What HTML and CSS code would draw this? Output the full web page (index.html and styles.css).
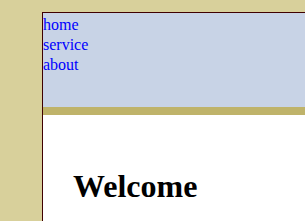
FILE: index.html
```html
<!DOCTYPE html>
<html lang="en">

<head>
  <meta charset="UTF-8">
  <title>Welcome</title>
  <link rel="stylesheet" href="styles.css">
</head>

<body>
  <div class="page">
    <!-- header with nav -->
    <div class="header">
      <a href="#home">home</a>
      <a href="#service">service</a>
      <a href="#about">about</a>
    </div>

    <div class="content">
      <h1>Welcome</h1>
    </div>
  </div>
</body>

</html>
```

FILE: styles.css
```css
/* page frame */
body {
  margin: 0;
  background: #d8d09b;
  font-family: 'Liberation Serif', serif;
}

.page {
  margin: 12px 0 0 42px;
  border-top: 1px solid #3f0000;
  border-left: 1px solid #3f0000;
  background: #fff;
  min-height: 400px;
}

/* header */
.header {
  background: #c8d3e6;
  height: 92px;
  padding-top: 2px;
  border-bottom: 8px solid #bfb36a;
}

.header a {
  display: block;
  color: #0000ff;
  text-decoration: none;
  font-size: 16px;
  line-height: 20px;
}

/* main content */
.content {
  padding: 32px 30px 30px;
}

.content h1 {
  font-size: 32px;
  margin: 21px 0;
}
```
